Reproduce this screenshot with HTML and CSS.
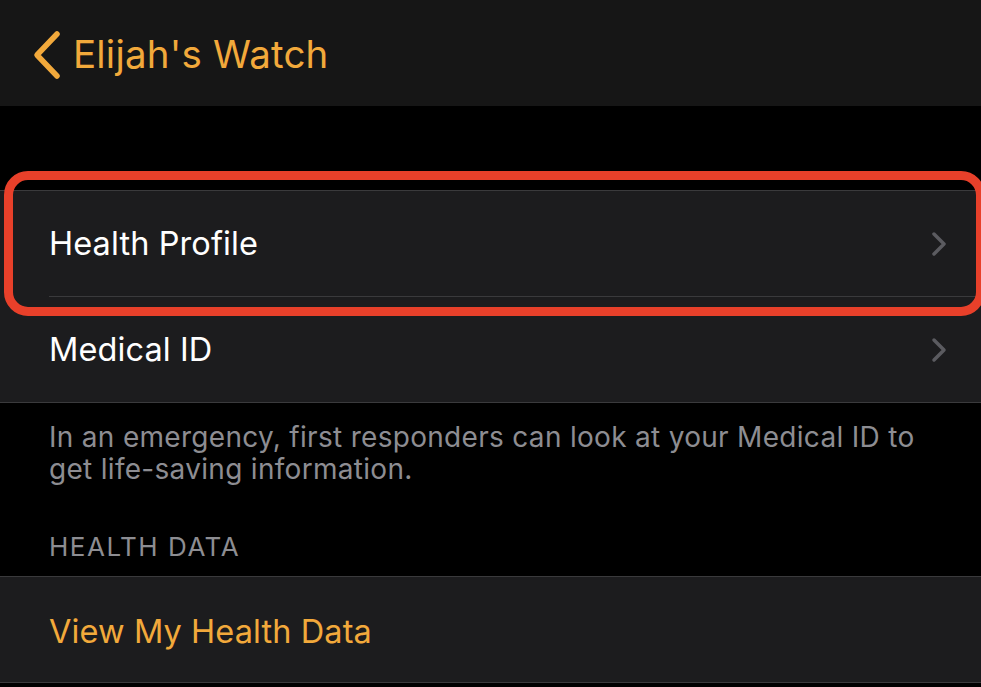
FILE: index.html
```html
<!DOCTYPE html>
<html>
<head>
<meta charset="utf-8">
<link rel="stylesheet" href="styles.css">
</head>
<body>
<div class="screen">
  <header class="nav">
    <svg class="back" width="30" height="50" viewBox="0 0 30 50"><path d="M26 4 L6 25 L26 46" fill="none" stroke="#f2a93b" stroke-width="5.5" stroke-linecap="round" stroke-linejoin="round"/></svg>
    <span class="nav-title">Elijah's Watch</span>
  </header>
  <div class="gap"></div>
  <section class="group">
    <div class="row">
      <span class="label">Health Profile</span>
      <svg class="chev" width="16" height="26" viewBox="0 0 16 26"><path d="M3 3 L13 13 L3 23" fill="none" stroke="#5b5b60" stroke-width="3.5" stroke-linecap="round" stroke-linejoin="round"/></svg>
    </div>
    <div class="row">
      <span class="label">Medical ID</span>
      <svg class="chev" width="16" height="26" viewBox="0 0 16 26"><path d="M3 3 L13 13 L3 23" fill="none" stroke="#5b5b60" stroke-width="3.5" stroke-linecap="round" stroke-linejoin="round"/></svg>
    </div>
    <div class="highlight"></div>
  </section>
  <p class="footer">In an emergency, first responders can look at your Medical ID to get life-saving information.</p>
  <h2 class="section-head">HEALTH DATA</h2>
  <section class="group">
    <div class="row">
      <span class="label link">View My Health Data</span>
    </div>
  </section>
</div>
</body>
</html>
```
FILE: styles.css
```css
html, body {
  margin: 0;
  padding: 0;
  background: #000;
}
.screen {
  width: 981px;
  height: 687px;
  overflow: hidden;
  font-family: Inter, "Noto Sans", sans-serif;
  background: #000;
}
.nav {
  height: 106px;
  background: #161616;
  display: flex;
  align-items: center;
  padding-left: 31px;
  box-sizing: border-box;
}
.back {
  display: block;
  margin-top: 4px;
}
.nav-title {
  color: #f2a93b;
  font-size: 38.5px;
  margin-left: 12px;
  margin-top: 2px;
  letter-spacing: 0.2px;
}
.gap {
  height: 84px;
}
.group {
  position: relative;
  background: #1c1c1e;
  border-top: 1px solid #3a3a3c;
  border-bottom: 1px solid #3a3a3c;
}
.row {
  height: 105px;
  display: flex;
  align-items: center;
  justify-content: space-between;
  padding: 0 34px 0 49px;
  position: relative;
}
.row + .row::before {
  content: "";
  position: absolute;
  left: 49px;
  right: 0;
  top: -1px;
  height: 1px;
  background: #3a3a3c;
}
.row + .row {
  margin-top: 1px;
}
.label {
  color: #fff;
  font-size: 32.5px;
  letter-spacing: 0.1px;
}
.link {
  color: #f2a93b;
  margin-top: 4px;
}
.chev {
  display: block;
}
.highlight {
  position: absolute;
  left: 4px;
  right: -4px;
  top: -20px;
  height: 127px;
  border: 9px solid #e8402a;
  border-radius: 24px;
  box-sizing: content-box;
}
.footer {
  margin: 0;
  padding: 18px 50px 0 49px;
  color: #8d8d92;
  font-size: 28px;
  line-height: 32px;
  letter-spacing: 0.3px;
}
.section-head {
  margin: 0;
  padding: 47px 49px 14px;
  color: #8d8d92;
  font-size: 26px;
  font-weight: 400;
  line-height: 30px;
  letter-spacing: 1.5px;
}
```
